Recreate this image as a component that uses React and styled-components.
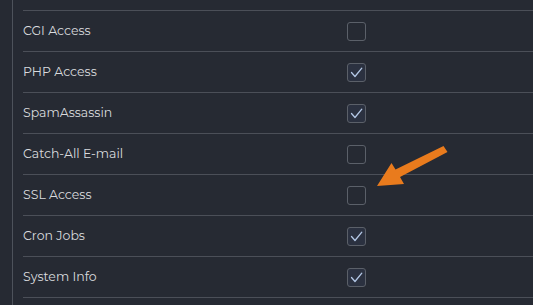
import React from 'react'
import styled, { createGlobalStyle } from 'styled-components'

const GlobalStyle = createGlobalStyle`
  html, body {
    margin: 0;
    padding: 0;
    background: #262a33;
    overflow: hidden;
  }
`

const rows = [
  { label: 'CGI Access', checked: false },
  { label: 'PHP Access', checked: true },
  { label: 'SpamAssassin', checked: true },
  { label: 'Catch-All E-mail', checked: false },
  { label: 'SSL Access', checked: false },
  { label: 'Cron Jobs', checked: true },
  { label: 'System Info', checked: true },
]

const Page = () => {
  return (
    <Wrapper>
      <GlobalStyle />
      <div className='gutter'></div>
      <List>
        {rows.map((item, index) => {
          return (
            <Row key={index}>
              <Label>{item.label}</Label>
              <Check checked={item.checked}>
                {item.checked && (
                  <svg width='13' height='11' viewBox='0 0 13 11'>
                    <path
                      d='M1.5 5.5 L5 9.5 L11.8 1.2'
                      fill='none'
                      stroke='#b4c8e6'
                      strokeWidth='1.3'
                      strokeLinecap='round'
                      strokeLinejoin='round'
                    />
                  </svg>
                )}
              </Check>
            </Row>
          )
        })}
        <Row />
      </List>
      <Arrow width='90' height='50' viewBox='0 0 90 50'>
        <path
          d='M71.5 0 L75.5 6 L28 31 L32 38 L5 40 L19.5 17 L23.5 23.5 Z'
          fill='#e97b1d'
        />
      </Arrow>
    </Wrapper>
  )
}

const Wrapper = styled.div`
  position: relative;
  display: flex;
  width: 533px;
  height: 305px;
  overflow: hidden;
  background: #262a33;
  font-family: 'Montserrat', 'Noto Sans', sans-serif;
  .gutter {
    width: 12px;
    flex: none;
    border-right: 1px solid #4d525b;
  }
`

const List = styled.div`
  flex: 1;
  padding-top: 10px;
  margin-left: 10px;
`

const Row = styled.div`
  display: flex;
  align-items: center;
  height: 40px;
  border-top: 1px solid #4b4f58;
`

const Label = styled.div`
  width: 324px;
  color: #d9dbde;
  font-size: 12.5px;
  padding-bottom: 2px;
`

const Check = styled.div`
  width: 17px;
  height: 17px;
  border: 1px solid #5b6069;
  border-radius: 3px;
  background: ${(props) => (props.checked ? '#2b3140' : 'transparent')};
  display: flex;
  align-items: center;
  justify-content: center;
`

const Arrow = styled.svg`
  position: absolute;
  left: 372px;
  top: 146px;
`

export default Page
